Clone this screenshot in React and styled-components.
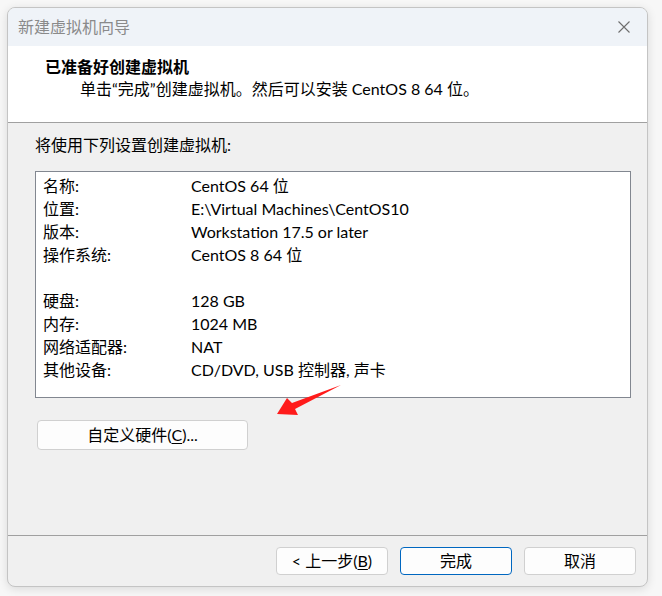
import styled, { createGlobalStyle } from 'styled-components';

const GlobalStyle = createGlobalStyle`
  html, body {
    margin: 0;
    padding: 0;
    background: #f7f7f7;
  }
  body {
    font-family: Lato, "Noto Sans CJK SC", sans-serif;
    font-size: 16px;
    color: #000;
  }
`;

const rows = [
  ['名称:', 'CentOS 64 位'],
  ['位置:', 'E:\\Virtual Machines\\CentOS10'],
  ['版本:', 'Workstation 17.5 or later'],
  ['操作系统:', 'CentOS 8 64 位'],
  null,
  ['硬盘:', '128 GB'],
  ['内存:', '1024 MB'],
  ['网络适配器:', 'NAT'],
  ['其他设备:', 'CD/DVD, USB 控制器, 声卡'],
];

const App = () => {
  return (
    <Page>
      <GlobalStyle />
      <Window>
        <TitleBar>
          <Title>新建虚拟机向导</Title>
          <CloseButton aria-label="关闭">
            <svg width="14" height="14" viewBox="0 0 14 14">
              <path d="M1.5 1.5 L12.5 12.5 M12.5 1.5 L1.5 12.5" stroke="#6e6e6e" strokeWidth="1.1" />
            </svg>
          </CloseButton>
        </TitleBar>

        <Header>
          <HeaderTitle>已准备好创建虚拟机</HeaderTitle>
          <HeaderSub>单击“完成”创建虚拟机。然后可以安装 CentOS 8 64 位。</HeaderSub>
        </Header>

        <Body>
          <Intro>将使用下列设置创建虚拟机:</Intro>
          <ListBox>
            {rows.map((row, i) =>
              row ? (
                <Row key={i}>
                  <Label>{row[0]}</Label>
                  <Value>{row[1]}</Value>
                </Row>
              ) : (
                <Row key={i} />
              )
            )}
          </ListBox>
          <CustomButton>
            自定义硬件(<u>C</u>)...
          </CustomButton>
          <Arrow width="80" height="40" viewBox="0 0 80 40">
            <polygon points="7,34 17,18 22,23 71,5 25,29 28,35" fill="#ff1b1b" />
          </Arrow>
        </Body>

        <Footer>
          <DialogButton>
            &lt; 上一步(<u>B</u>)
          </DialogButton>
          <DialogButton $primary>完成</DialogButton>
          <DialogButton>取消</DialogButton>
        </Footer>
      </Window>
    </Page>
  );
};

export default App;

const Page = styled.div`
  width: 662px;
  height: 596px;
  padding: 7px 0 0 7px;
  box-sizing: border-box;
`;

const Window = styled.div`
  width: 641px;
  height: 580px;
  box-sizing: border-box;
  border: 1px solid #c4c4c4;
  border-radius: 8px;
  overflow: hidden;
  background: #f0f0f0;
  box-shadow: 0 2px 10px rgba(0, 0, 0, 0.12);
  display: flex;
  flex-direction: column;
`;

const TitleBar = styled.div`
  height: 38px;
  flex: none;
  background: #eff3f8;
  display: flex;
  align-items: center;
  justify-content: space-between;
  padding: 0 15px 0 10px;
`;

const Title = styled.div`
  color: #8a8a8a;
  font-size: 16px;
  line-height: 22px;
  margin-top: -1px;
`;

const CloseButton = styled.div`
  display: flex;
  align-items: center;
  justify-content: center;
  width: 16px;
  height: 16px;
`;

const Header = styled.div`
  height: 77px;
  flex: none;
  box-sizing: border-box;
  background: #fff;
  border-bottom: 1px solid #a0a0a0;
  padding: 10px 0 0 37px;
`;

const HeaderTitle = styled.div`
  font-weight: 700;
  line-height: 22px;
`;

const HeaderSub = styled.div`
  line-height: 22px;
  padding-left: 35px;
`;

const Body = styled.div`
  position: relative;
  flex: 1;
  padding: 11px 16px 0 27px;
  border-bottom: 1px solid #a0a0a0;
`;

const Intro = styled.div`
  line-height: 22px;
  margin-bottom: 15px;
`;

const ListBox = styled.div`
  height: 227px;
  box-sizing: border-box;
  border: 1px solid #828790;
  background: #fff;
  padding: 2px 0 0 7px;
`;

const Row = styled.div`
  display: flex;
  height: 23px;
  line-height: 23px;
  white-space: nowrap;
`;

const Label = styled.div`
  width: 148px;
  flex: none;
`;

const Value = styled.div``;

const CustomButton = styled.div`
  margin: 22px 0 0 2px;
  width: 211px;
  height: 30px;
  box-sizing: border-box;
  border: 1px solid #d0d0d0;
  border-radius: 4px;
  background: #fdfdfd;
  display: flex;
  align-items: center;
  justify-content: center;
  line-height: 22px;

  u {
    text-underline-offset: 2px;
  }
`;

const Arrow = styled.svg`
  position: absolute;
  left: 262px;
  top: 257px;
`;

const Footer = styled.div`
  height: 50px;
  flex: none;
  display: flex;
  justify-content: flex-end;
  align-items: flex-start;
  gap: 12px;
  padding: 11px 11px 0 0;
  box-sizing: border-box;
`;

const DialogButton = styled.div`
  width: 112px;
  height: 28px;
  box-sizing: border-box;
  border: 1px solid ${(p) => (p.$primary ? '#0067c0' : '#d0d0d0')};
  border-radius: 4px;
  background: #fdfdfd;
  display: flex;
  align-items: center;
  justify-content: center;
  line-height: 22px;

  u {
    text-underline-offset: 2px;
  }
`;
